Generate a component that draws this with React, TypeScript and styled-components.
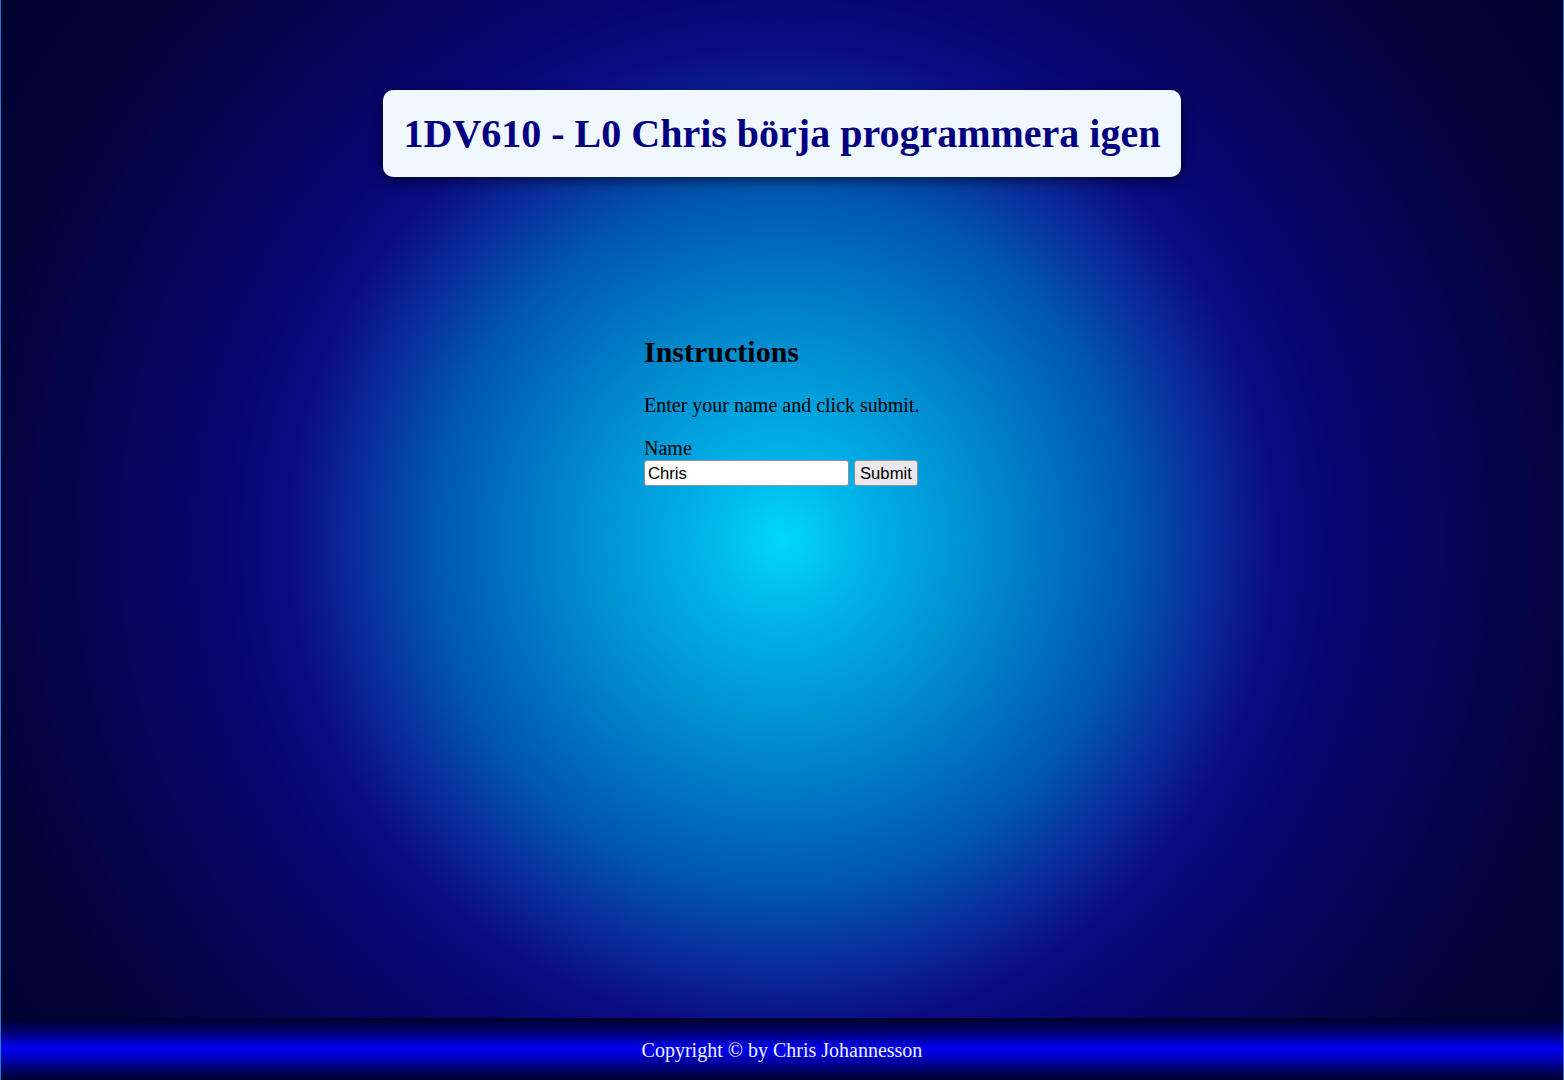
import React from "react";
import styled, { createGlobalStyle } from "styled-components";

const GlobalStyle = createGlobalStyle`
  html, body {
    margin: 0;
    padding: 0;
    background: #2478d0;
  }
  body {
    font-family: "Liberation Serif", "Times New Roman", serif;
    font-size: 20px;
    color: #000;
  }
`;

const Page = styled.div`
  box-sizing: border-box;
  min-height: 100vh;
  margin: 0 1px;
  display: flex;
  flex-direction: column;
  background: radial-gradient(
    circle farthest-corner at 50% 50%,
    #00d8fa 0%,
    #00b2e8 9%,
    #0086cb 23%,
    #0056b0 37%,
    #0a2c9a 45%,
    #0a0c82 52%,
    #070670 59%,
    #050556 71%,
    #030338 86%,
    #020230 100%
  );
`;

const Header = styled.header`
  display: flex;
  justify-content: center;
  padding-top: 90px;
`;

const TitleCard = styled.div`
  background: #f0f7ff;
  border-radius: 10px;
  padding: 21px 21px 20px;
  box-shadow: 0 4px 12px rgba(0, 0, 0, 0.55);
`;

const Title = styled.h1`
  margin: 0;
  font-size: 40px;
  font-weight: bold;
  line-height: 46px;
  color: #000080;
  white-space: nowrap;
`;

const Main = styled.main`
  flex: 1;
  display: flex;
  justify-content: center;
  padding-top: 133px;
`;

const Content = styled.section`
  width: 276px;
`;

const Heading = styled.h2`
  margin: 25px 0 25px;
  font-size: 30px;
  font-weight: bold;
`;

const Text = styled.p`
  margin: 0 0 20px;
`;

const Form = styled.form`
  display: flex;
  flex-direction: column;
  align-items: flex-start;
`;

const Label = styled.label`
  display: block;
`;

const Row = styled.div`
  display: flex;
  align-items: center;
  gap: 5px;
`;

const Input = styled.input`
  box-sizing: border-box;
  width: 205px;
  height: 26px;
  padding: 2px 3px 0;
  border: 1px solid #8f8f9d;
  border-radius: 3px;
  background: #fff;
  font-family: "Liberation Sans", Arial, sans-serif;
  font-size: 16.67px;
  color: #000;
`;

const Button = styled.button`
  box-sizing: border-box;
  height: 26px;
  padding: 2px 5px 0;
  border: 1px solid #8f8f9d;
  border-radius: 3px;
  background: #e9e9ed;
  font-family: "Liberation Sans", Arial, sans-serif;
  font-size: 16.67px;
  color: #000;
`;

const Footer = styled.footer`
  box-sizing: border-box;
  height: 62px;
  padding-top: 2px;
  display: flex;
  align-items: center;
  justify-content: center;
  color: #eef2ff;
  background: linear-gradient(
    to bottom,
    #000028 0%,
    #00007a 25%,
    #0000f0 48%,
    #0000c8 62%,
    #000070 82%,
    #000030 100%
  );
`;

export default function App() {
  return (
    <>
      <GlobalStyle />
      <Page>
        <Header>
          <TitleCard>
            <Title>1DV610 - L0 Chris börja programmera igen</Title>
          </TitleCard>
        </Header>
        <Main>
          <Content>
            <Heading>Instructions</Heading>
            <Text>Enter your name and click submit.</Text>
            <Form onSubmit={(e) => e.preventDefault()}>
              <Label htmlFor="name">Name</Label>
              <Row>
                <Input id="name" type="text" defaultValue="Chris" />
                <Button type="submit">Submit</Button>
              </Row>
            </Form>
          </Content>
        </Main>
        <Footer>Copyright © by Chris Johannesson</Footer>
      </Page>
    </>
  );
}
